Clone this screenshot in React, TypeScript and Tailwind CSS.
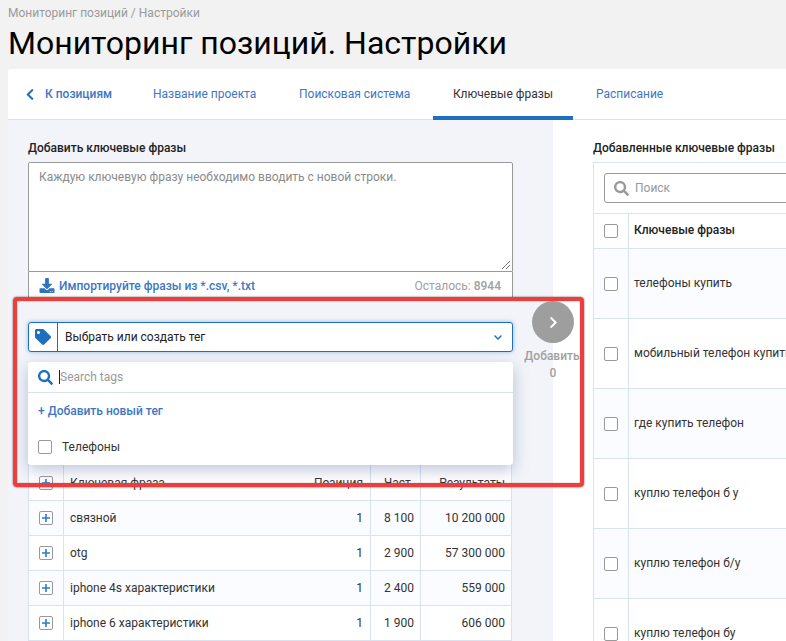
import React from "react";
import { FaChevronLeft, FaChevronRight, FaChevronDown, FaSearch, FaTag, FaDownload } from "react-icons/fa";

const leftRows = [
  ["связной", "1", "8 100", "10 200 000"],
  ["otg", "1", "2 900", "57 300 000"],
  ["iphone 4s характеристики", "1", "2 400", "559 000"],
  ["iphone 6 характеристики", "1", "1 900", "606 000"],
];
const rightRows = [
  "телефоны купить",
  "мобильный телефон купить",
  "где купить телефон",
  "куплю телефон б у",
  "куплю телефон б/у",
  "куплю телефон бу",
];

function Check() {
  return <span className="block w-[14px] h-[14px] rounded-[2px] border border-[#999] bg-white shrink-0" />;
}

function PlusBox() {
  return (
    <span className="flex items-center justify-center w-[14px] h-[14px] rounded-[2px] border border-[#999] bg-white">
      <svg width="10" height="10" viewBox="0 0 10 10">
        <path d="M5 1v8M1 5h8" stroke="#2f7cc9" strokeWidth="1.6" />
      </svg>
    </span>
  );
}

function LeftRow({ cells, tinted, header }: { cells: string[]; tinted?: boolean; header?: boolean }) {
  const cls = tinted ? "bg-[#fbfcff]" : "bg-white";
  return (
    <div className={`flex border-b border-[#d9e2f0] text-[12px] text-[#333] ${header ? "h-[36px] bg-white" : "h-[35px] " + cls}`}>
      <div className="w-[35px] flex items-center justify-center border-r border-[#d9e2f0] shrink-0">
        <PlusBox />
      </div>
      <div className="w-[237px] pl-[6px] flex items-center shrink-0 whitespace-nowrap">{cells[0]}</div>
      <div className="w-[70px] pr-[7px] flex items-center justify-end border-r border-[#d9e2f0] shrink-0">{cells[1]}</div>
      <div className="w-[50px] pr-[6px] flex items-center justify-end border-r border-[#d9e2f0] shrink-0">{cells[2]}</div>
      <div className="flex-1 pr-[6px] flex items-center justify-end">{cells[3]}</div>
    </div>
  );
}

export default function App() {
  return (
    <div className="relative w-[786px] h-[641px] overflow-hidden bg-[#f2f2f2] font-['Roboto',sans-serif] pl-2">
      <div className="pt-[6px] text-[12px] leading-[14px] text-[#9a9a9a]">Мониторинг позиций / Настройки</div>
      <h1 className="mt-[1px] text-[32px] leading-[44px] font-normal text-black whitespace-nowrap">
        Мониторинг позиций. Настройки
      </h1>
      <div className="mt-[4px] w-[900px] h-[600px] bg-white rounded-t-[3px]">
        <div className="flex h-[51px] border-b border-[#d9e2f0] text-[12px] text-[#3d77c4]">
          <div className="flex items-center w-[123px] pl-[18px] font-medium">
            <FaChevronLeft className="text-[#1f6fc0] w-[8px] h-[13px] mr-[11px]" />
            <span>К позициям</span>
          </div>
          <div className="flex items-center w-[146px] pl-[22px]">Название проекта</div>
          <div className="flex items-center w-[156px] pl-[22px]">Поисковая система</div>
          <div className="flex items-center justify-center w-[140px] h-[51px] border-b-[4px] border-[#1f6fc0] text-[#333] pt-[3px]">Ключевые фразы</div>
          <div className="flex items-center pl-[23px]">Расписание</div>
        </div>
        <div className="flex h-[549px]">
          <div className="relative w-[545px] shrink-0 bg-[#f2f4f9] pl-[20px] pt-[20px]">
            <div className="text-[12px] leading-[16px] font-medium text-[#222]">Добавить ключевые фразы</div>
            <div className="w-[485px] mt-[6px]">
              <div className="relative h-[110px] bg-white border border-[#999] rounded-t-[2px] px-[10px] py-[6px] text-[12px] leading-[16px] text-[#8a8a8a]">
                Каждую ключевую фразу необходимо вводить с новой строки.
                <svg className="absolute right-[1px] bottom-[1px]" width="10" height="10" viewBox="0 0 10 10">
                  <path d="M1 9 9 1M5 9 9 5" stroke="#777" strokeWidth="1" />
                </svg>
              </div>
              <div className="flex items-center justify-between h-[28px] bg-white border-x border-b border-[#999] pl-[10px] pr-[11px] text-[12px]">
                <span className="flex items-center gap-[4px] font-medium text-[#3d77c4]">
                  <FaDownload className="w-[16px] h-[15px] text-[#2f72bd]" />
                  Импортируйте фразы из *.csv, *.txt
                </span>
                <span className="text-[#a0a0a0]">Осталось: <span className="font-medium">8944</span></span>
              </div>
              <div className="flex items-center h-[30px] mt-[22px] bg-white border border-[#1f6fc0] rounded-[3px] shadow-[0_0_4px_rgba(31,111,192,0.45)] text-[12px] text-[#222]">
                <span className="flex items-center justify-center w-[29px] h-full border-r border-[#1f6fc0]">
                  <FaTag className="w-[16px] h-[16px] text-[#1f6fc0]" />
                </span>
                <span className="pl-[7px] flex-1">Выбрать или создать тег</span>
                <FaChevronDown className="w-[10px] h-[9px] text-[#1f6fc0] mr-[9px]" />
              </div>
              <div className="mt-[112px] w-[484px] border-t border-l border-r border-[#d9e2f0]">
                <LeftRow header cells={["Ключевая фраза", "Позиция", "Част.", "Результаты"]} />
                {leftRows.map((r, i) => (
                  <LeftRow key={r[0]} cells={r} tinted={i % 2 === 0} />
                ))}
              </div>
            </div>

            <div className="absolute left-[20px] top-[242px] w-[485px] h-[103px] bg-white rounded-[3px] shadow-[0_5px_16px_rgba(90,110,160,0.4)] text-[12px]">
              <div className="flex items-center h-[31px] border-b border-[#d9e2f0] pl-[10px]">
                <FaSearch className="w-[15px] h-[15px] text-[#1f6fc0]" />
                <span className="ml-[6px] w-px h-[14px] bg-[#222]" />
                <span className="text-[#999]">Search tags</span>
              </div>
              <div className="flex items-center h-[36px] pl-[10px] font-medium text-[#3d77c4]">+ Добавить новый тег</div>
              <div className="flex items-center h-[36px] pl-[10px] gap-[10px] text-[#333]">
                <Check />
                Телефоны
              </div>
            </div>

            <div className="absolute left-[505px] top-[181px] w-[80px] flex flex-col items-center text-[12px] leading-[17px] text-[#a0a0a0]">
              <span className="flex items-center justify-center w-[42px] h-[42px] rounded-full bg-[#9e9e9e] mb-[5px]">
                <FaChevronRight className="w-[11px] h-[13px] text-white" />
              </span>
              <span className="-ml-[2px] font-medium">Добавить</span>
              <span className="font-medium">0</span>
            </div>
          </div>

          <div className="flex-1 pl-[40px] pt-[20px]">
            <div className="text-[12px] leading-[16px] font-medium text-[#222] whitespace-nowrap">Добавленные ключевые фразы</div>
            <div className="w-[400px] mt-[6px] border-l border-t border-[#d9e2f0]">
              <div className="h-[51px] pl-[10px] pt-[10px] border-b border-[#d9e2f0]">
                <div className="flex items-center h-[30px] border border-[#999] rounded-[3px] pl-[9px] text-[12px] text-[#999]">
                  <FaSearch className="w-[15px] h-[15px] text-[#9a9a9a] mr-[6px]" />
                  Поиск
                </div>
              </div>
              <div className="flex h-[35px] border-b border-[#d9e2f0]">
                <div className="flex items-center justify-center w-[35px] border-r border-[#d9e2f0]"><Check /></div>
                <div className="flex items-center pl-[5px] pb-[2px] text-[12px] font-medium text-[#222]">Ключевые фразы</div>
              </div>
              {rightRows.map((t, i) => (
                <div key={t} className={`flex h-[70px] border-b border-[#d9e2f0] ${i % 2 === 0 ? "bg-[#fbfcff]" : "bg-white"}`}>
                  <div className="flex items-center justify-center w-[35px] border-r border-[#d9e2f0]"><Check /></div>
                  <div className="flex items-center pl-[5px] pb-[1px] text-[12px] text-[#333] whitespace-nowrap">{t}</div>
                </div>
              ))}
            </div>
          </div>
        </div>
      </div>

      <div className="absolute left-[13px] top-[297px] w-[571px] h-[190px] border-[4px] border-[#f23c3c] rounded-[4px] shadow-[0_0_2px_rgba(0,0,0,0.7),inset_0_0_1px_rgba(0,0,0,0.7)]" />
    </div>
  );
}
